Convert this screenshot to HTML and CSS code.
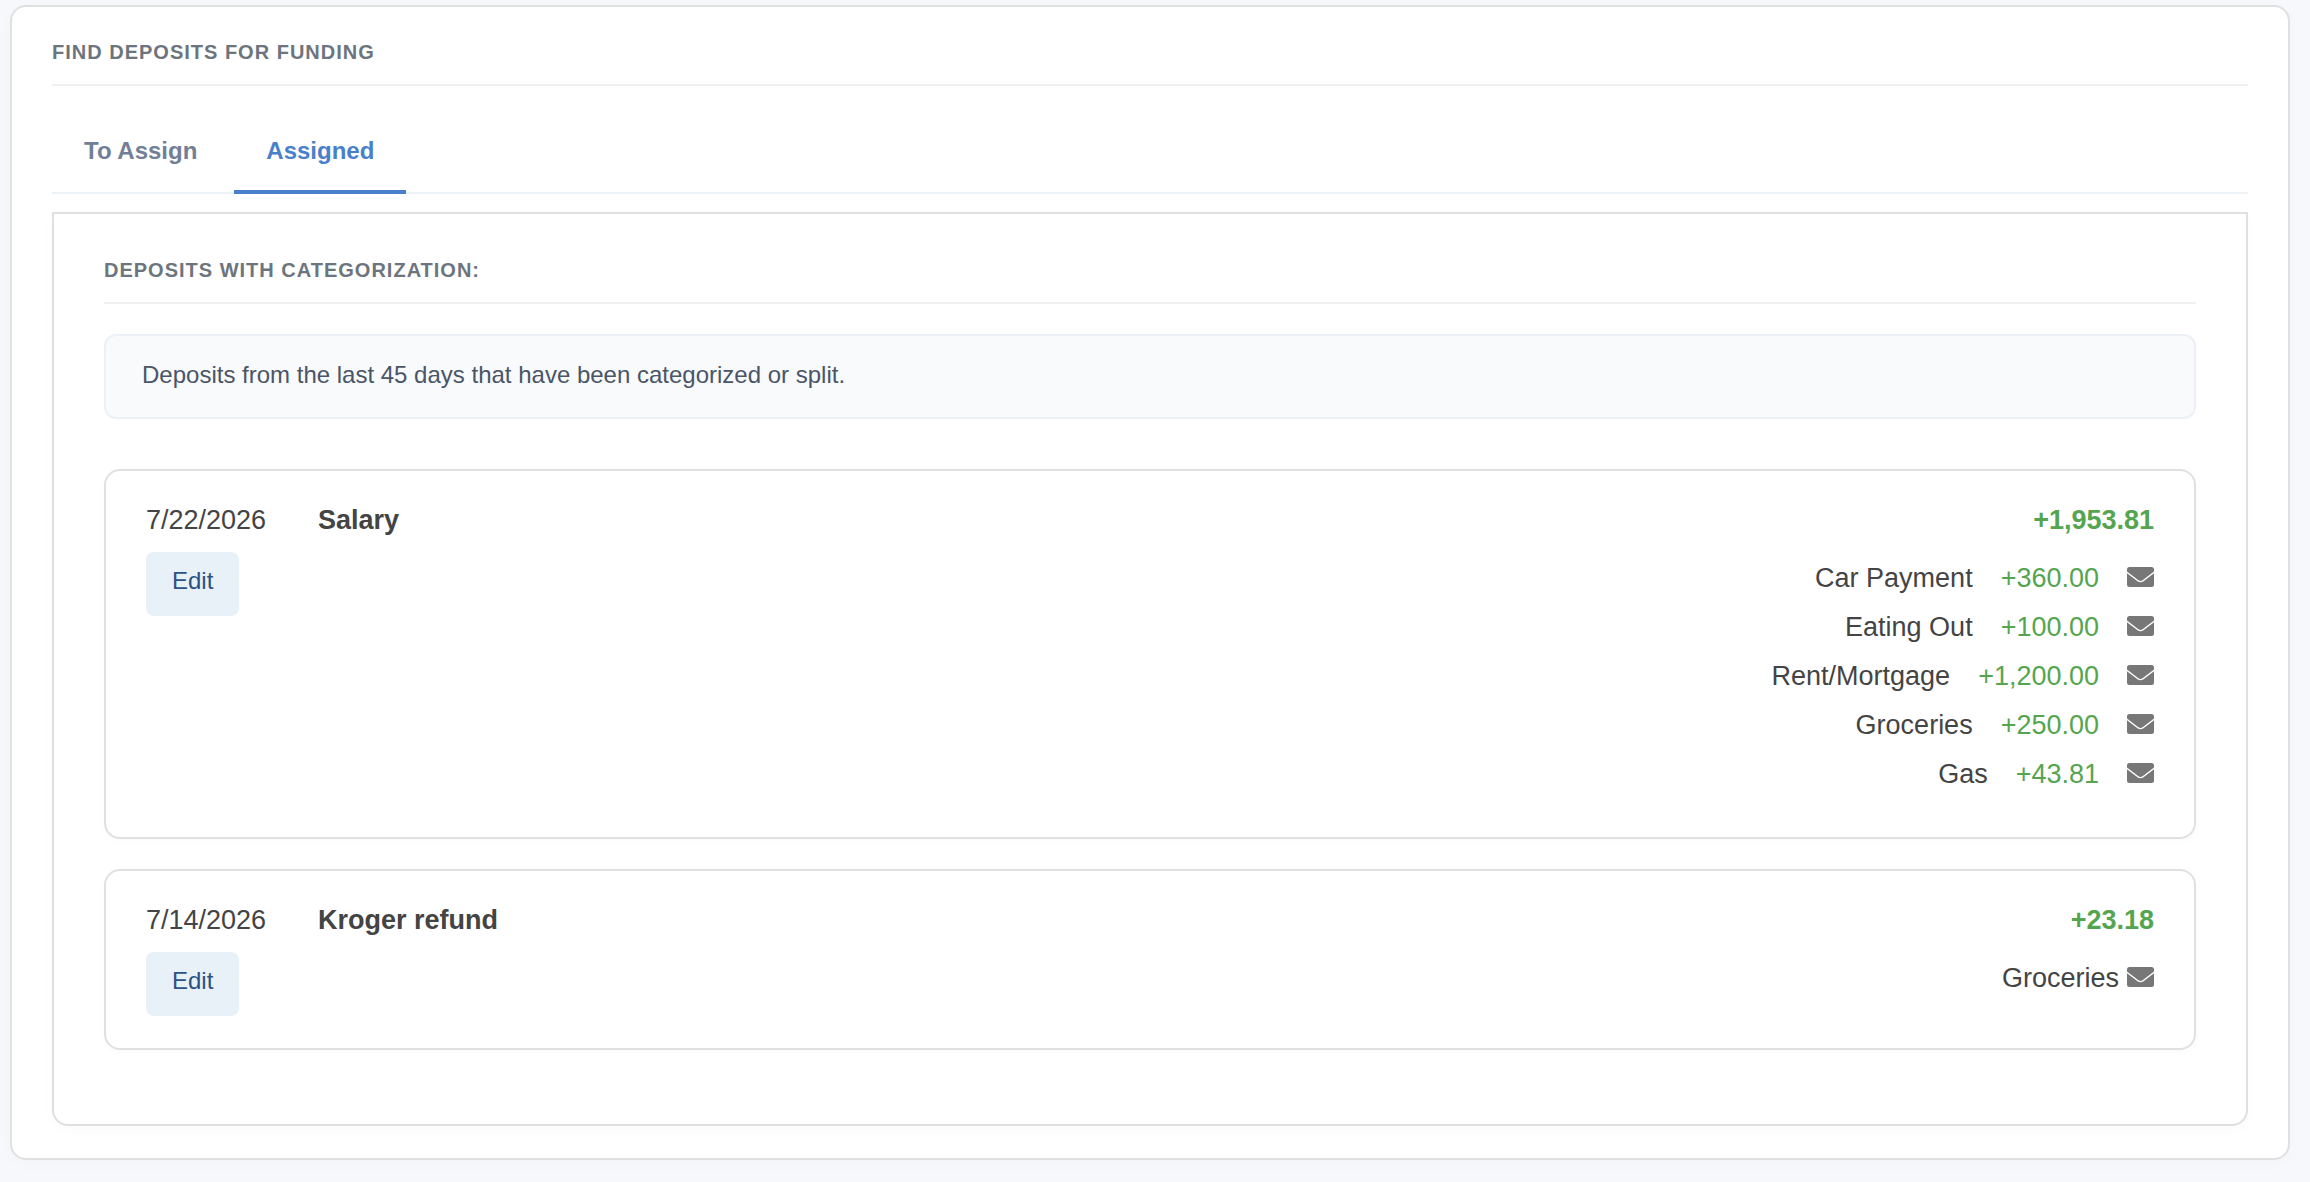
FILE: index.html
```html
<!DOCTYPE html>
<html lang="en">
<head>
    <meta charset="UTF-8">
    <meta name="viewport" content="width=device-width, initial-scale=1.0">
    <title>Find Deposits for Funding</title>
    <link rel="stylesheet" href="styles.css">
</head>
<body>
    <!-- shared envelope symbol -->
    <svg class="symbols" aria-hidden="true">
        <symbol id="envelope" viewBox="0 0 27 20">
            <path d="M2.500 0H24.500A2.500 2.500 0 0 1 27 2.500V4.600L15.600 13.200Q13.500 14.600 11.400 13.200L0 4.600V2.500A2.500 2.500 0 0 1 2.500 0Z"/>
            <path d="M0 6.200L10.500 14.200Q13.500 16.300 16.500 14.200L27 6.200V17.500A2.500 2.500 0 0 1 24.500 20H2.500A2.500 2.500 0 0 1 0 17.500Z"/>
        </symbol>
    </svg>

    <main class="card">
        <h2 class="section-title">Find Deposits for Funding</h2>

        <div class="tabs" role="tablist">
            <button class="tab" type="button" role="tab" aria-selected="false">To Assign</button>
            <button class="tab active" type="button" role="tab" aria-selected="true">Assigned</button>
        </div>

        <section class="panel" role="tabpanel">
            <h3 class="section-title">Deposits with categorization:</h3>
            <p class="info">Deposits from the last 45 days that have been categorized or split.</p>

            <article class="deposit">
                <div class="deposit-date">
                    <span>7/22/2026</span>
                    <button class="edit-button" type="button">Edit</button>
                </div>
                <div class="deposit-name">Salary</div>
                <div class="deposit-amounts">
                    <div class="total">+1,953.81</div>
                    <ul class="splits">
                        <li><span>Car Payment</span><span class="amount">+360.00</span><svg class="icon"><use href="#envelope"/></svg></li>
                        <li><span>Eating Out</span><span class="amount">+100.00</span><svg class="icon"><use href="#envelope"/></svg></li>
                        <li><span>Rent/Mortgage</span><span class="amount">+1,200.00</span><svg class="icon"><use href="#envelope"/></svg></li>
                        <li><span>Groceries</span><span class="amount">+250.00</span><svg class="icon"><use href="#envelope"/></svg></li>
                        <li><span>Gas</span><span class="amount">+43.81</span><svg class="icon"><use href="#envelope"/></svg></li>
                    </ul>
                </div>
            </article>

            <article class="deposit">
                <div class="deposit-date">
                    <span>7/14/2026</span>
                    <button class="edit-button" type="button">Edit</button>
                </div>
                <div class="deposit-name">Kroger refund</div>
                <div class="deposit-amounts">
                    <div class="total">+23.18</div>
                    <div class="category"><span>Groceries</span><svg class="icon"><use href="#envelope"/></svg></div>
                </div>
            </article>
        </section>
    </main>
</body>
</html>
```

FILE: styles.css
```css
* {
    box-sizing: border-box;
}
body {
    margin: 0;
    padding: 5px 20px 16px 10px;
    background-color: #f7f8fb;
    color: #444;
    font-family: "Liberation Sans", Arial, sans-serif;
    font-size: 27px;
    line-height: 40px;
}
button {
    font-family: inherit;
    border: none;
    cursor: pointer;
}
.symbols {
    display: none;
}
.card {
    padding: 29px 40px 32px;
    background-color: #fff;
    border: 2px solid #e0e0e0;
    border-radius: 16px;
    box-shadow: 0 4px 16px rgba(0, 0, 0, 0.02);
}
.section-title {
    margin: 0;
    padding-bottom: 16px;
    border-bottom: 2px solid #f0f0f0;
    color: #6c757d;
    font-size: 20px;
    line-height: 32px;
    letter-spacing: 1px;
    text-transform: uppercase;
}

/* Tabs */
.tabs {
    display: flex;
    gap: 5px;
    margin-top: 32px;
    box-shadow: inset 0 -2px #edf2f7;
}
.tab {
    padding: 17px 32px 23px;
    background: none;
    border-bottom: 4px solid transparent;
    color: #718096;
    font-size: 24px;
    font-weight: bold;
    line-height: 32px;
}
.tab.active {
    border-bottom-color: #4a80cb;
    color: #4a80cb;
}

/* Tab content */
.panel {
    margin-top: 18px;
    padding: 40px 50px 74px;
    border: 2px solid #e0e0e0;
    border-radius: 0 0 16px 16px;
    box-shadow: 0 4px 16px rgba(0, 0, 0, 0.02);
}
.info {
    margin: 30px 0 50px;
    padding: 21px 36px 24px;
    background-color: #f8fafc;
    border: 2px solid #edf0f7;
    border-radius: 12px;
    color: #4a5568;
    font-size: 24px;
    line-height: 36px;
}

/* Deposits */
.deposit {
    display: flex;
    padding: 29px 40px 32px;
    border: 2px solid #e0e0e0;
    border-radius: 16px;
    box-shadow: 0 2px 8px rgba(0, 0, 0, 0.02);
}
.deposit + .deposit {
    margin-top: 30px;
}
.deposit-date {
    display: flex;
    flex-direction: column;
    align-items: flex-start;
    gap: 12px;
    width: 172px;
}
.deposit-name {
    flex: 1;
    font-weight: bold;
}
.edit-button {
    padding: 13px 26px 19px;
    background-color: #e8f0f8;
    border-radius: 8px;
    color: #2c5282;
    font-size: 24px;
    line-height: 32px;
}
.deposit-amounts {
    text-align: right;
}
.total {
    color: #55a550;
    font-weight: bold;
}
.splits {
    display: flex;
    flex-direction: column;
    gap: 9px;
    margin: 18px 0 0;
    padding: 0 0 11px;
    list-style: none;
}
.splits li {
    display: flex;
    justify-content: flex-end;
    gap: 28px;
}
.amount {
    color: #55a550;
}
.category {
    display: flex;
    justify-content: flex-end;
    gap: 8px;
    margin-top: 18px;
}
.icon {
    width: 27px;
    height: 20px;
    margin-top: 9px;
    fill: #777;
}
```
